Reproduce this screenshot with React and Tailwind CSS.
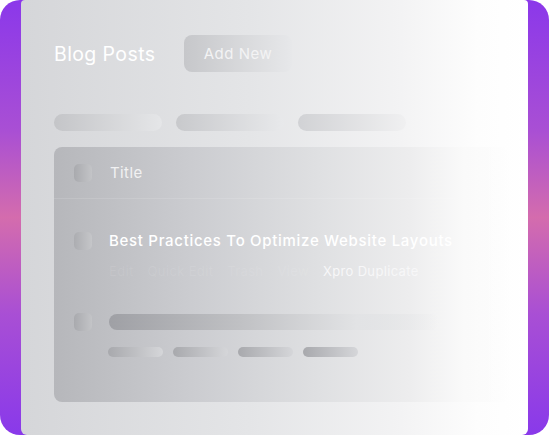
export default function App() {
  const actions = ['Edit', 'Quick Edit', 'Trash', 'View']

  return (
    <div
      className="w-[549px] h-[435px] rounded-[20px] bg-[linear-gradient(180deg,#8b38ea_0%,#a94fd4_30%,#d46cad_50%,#a94fd4_72%,#8939ea_100%)] px-[21px]"
      style={{ fontFamily: 'Inter, "Open Sans", sans-serif' }}
    >
      <div className="h-full rounded-t-[4px] rounded-b-[6px] bg-[linear-gradient(90deg,#d5d6d9_0%,#e4e5e7_45%,#f3f3f4_75%,#fdfdfd_90%,#ffffff_100%)] pl-[33px] pr-[18px] pt-[35px] overflow-hidden">
        {/* header */}
        <div className="flex items-center h-[37px]">
          <h1 className="text-[19.5px] text-white tracking-[0.4px] w-[130px] pt-[3px]">Blog Posts</h1>
          <button className="h-[37px] w-[108px] rounded-[8px] bg-[linear-gradient(90deg,#c6c7ca,#e7e8ea)] text-[15px] text-[#f3f3f4] tracking-[0.5px] pt-[1px]">
            Add New
          </button>
        </div>

        {/* filter pills */}
        <div className="flex gap-[14px] mt-[42px]">
          <div className="h-[17px] w-[108px] rounded-full bg-[linear-gradient(90deg,#c4c5c8,#e5e6e8)]" />
          <div className="h-[17px] w-[108px] rounded-full bg-[linear-gradient(90deg,#c8c9cc,#e8e9eb)]" />
          <div className="h-[17px] w-[108px] rounded-full bg-[linear-gradient(90deg,#d1d2d5,#f0f0f1)]" />
        </div>

        {/* table */}
        <div className="mt-[16px] h-[255px] rounded-[8px] bg-[linear-gradient(90deg,#b6b7bb_0%,#cbccd0_30%,#dfe0e2_58%,#ededee_78%,#fafafa_90%,#ffffff00_100%)]">
          <div className="flex items-center h-[52px] pl-[20px] border-b border-[#ffffff1f]">
            <div className="w-[18px] h-[18px] rounded-[5px] bg-[linear-gradient(90deg,#a9aaae,#c3c4c7)]" />
            <span className="ml-[18px] text-[15px] text-[#f1f1f2] tracking-[0.4px] pt-[1px]">Title</span>
          </div>

          <div className="pl-[20px] pt-[31px]">
            <div className="flex items-center">
              <div className="w-[18px] h-[18px] rounded-[5px] bg-[linear-gradient(90deg,#acadb1,#c5c6c9)]" />
              <span className="ml-[17px] text-[15px] font-medium text-white tracking-[0.7px]">
                Best Practices To Optimize Website Layouts
              </span>
            </div>
            <div className="flex gap-[14px] ml-[35px] mt-[9px] text-[13px] tracking-[0.35px]">
              {actions.map((a) => (
                <span key={a} className="text-[#ffffff17]">{a}</span>
              ))}
              <span className="text-[#f7f7f8]">Xpro Duplicate</span>
            </div>
          </div>

          <div className="pl-[20px] pt-[32px]">
            <div className="flex items-center">
              <div className="w-[18px] h-[18px] rounded-[5px] bg-[linear-gradient(90deg,#a9aaae,#c3c4c7)]" />
              <div className="ml-[17px] h-[16px] w-[330px] rounded-full bg-[linear-gradient(90deg,#9fa0a5_0%,#c0c1c4_40%,#e2e3e5_75%,#ffffff00_100%)]" />
            </div>
            <div className="flex gap-[10px] ml-[34px] mt-[16px]">
              {[0, 1, 2, 3].map((i) => (
                <div
                  key={i}
                  className="h-[10px] w-[55px] rounded-full bg-[linear-gradient(90deg,#a8a9ad,#d5d6d9)]"
                />
              ))}
            </div>
          </div>
        </div>
      </div>
    </div>
  )
}
